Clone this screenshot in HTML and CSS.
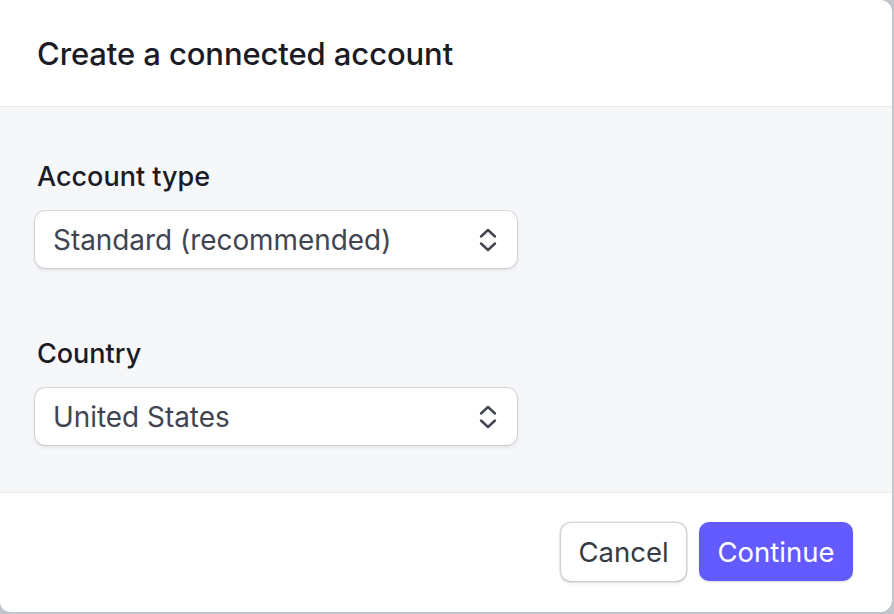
FILE: index.html
```html
<!DOCTYPE html>
<html>
<head>
<meta charset="utf-8">
<link rel="stylesheet" href="styles.css">
</head>
<body>
<div class="dialog">
  <header class="dialog-header">
    <h1 class="title">Create a connected account</h1>
  </header>
  <section class="dialog-body">
    <div class="field">
      <label class="label">Account type</label>
      <div class="select">
        <span class="select-value">Standard (recommended)</span>
        <svg class="chevrons" width="20" height="26" viewBox="0 0 20 26" fill="none" stroke="#414552" stroke-width="2.4" stroke-linecap="round" stroke-linejoin="round"><path d="M3 9.5 L10 3 L17 9.5"/><path d="M3 16.5 L10 23 L17 16.5"/></svg>
      </div>
    </div>
    <div class="field">
      <label class="label">Country</label>
      <div class="select">
        <span class="select-value">United States</span>
        <svg class="chevrons" width="20" height="26" viewBox="0 0 20 26" fill="none" stroke="#414552" stroke-width="2.4" stroke-linecap="round" stroke-linejoin="round"><path d="M3 9.5 L10 3 L17 9.5"/><path d="M3 16.5 L10 23 L17 16.5"/></svg>
      </div>
    </div>
  </section>
  <footer class="dialog-footer">
    <button class="btn btn-secondary">Cancel</button>
    <button class="btn btn-primary">Continue</button>
  </footer>
</div>
</body>
</html>
```
FILE: styles.css
```css
html, body {
  margin: 0;
  padding: 0;
}
body {
  background: #c3c5cc;
  width: 894px;
  height: 614px;
  overflow: hidden;
  font-family: Inter, "Noto Sans", sans-serif;
}
.dialog {
  width: 892px;
  height: 612px;
  background: #ffffff;
  border-radius: 0 12px 12px 10px;
  display: flex;
  flex-direction: column;
  overflow: hidden;
}
.dialog-header {
  display: flex;
  align-items: center;
  padding: 0 37px;
  border-bottom: 1px solid #e6e8ec;
  box-sizing: border-box;
  flex: none;
  height: 107px;
}
.title {
  margin: 0;
  font-size: 31px;
  font-weight: 500;
  color: #1a1b25;
  letter-spacing: -0.1px;
}
.dialog-body {
  background: #f6f7f9;
  padding: 53px 35px 0;
  display: flex;
  flex-direction: column;
  gap: 69px;
  border-bottom: 1px solid #ebeef1;
  flex: none;
  height: 386px;
  box-sizing: border-box;
}
.field {
  display: flex;
  flex-direction: column;
  gap: 17px;
}
.label {
  font-size: 27px;
  font-weight: 500;
  color: #1a1b25;
  line-height: 34px;
  padding-left: 2px;
}
.select {
  width: 482px;
  height: 57px;
  box-sizing: border-box;
  background: #ffffff;
  border-radius: 10px;
  box-shadow: 0 0 0 1px rgba(64, 68, 82, 0.16), 0 2px 4px rgba(64, 68, 82, 0.12);
  display: flex;
  align-items: center;
  justify-content: space-between;
  padding: 0 19px 0 18px;
}
.select-value {
  font-size: 27.9px;
  color: #414552;
}
.chevrons {
  display: block;
}
.dialog-footer {
  flex: 1;
  display: flex;
  justify-content: flex-end;
  align-items: center;
  gap: 13px;
  padding: 0 39px 2px 0;
}
.btn {
  font-family: Inter, "Noto Sans", sans-serif;
  font-size: 27.5px;
  height: 58px;
  border-radius: 10px;
  border: none;
  padding: 0;
  cursor: pointer;
}
.btn-secondary {
  background: #ffffff;
  color: #353a44;
  box-shadow: 0 0 0 1.5px rgba(64, 68, 82, 0.2), 0 2px 4px rgba(64, 68, 82, 0.12);
  width: 125px;
}
.btn-primary {
  background: #635bff;
  color: #ffffff;
  width: 154px;
  height: 59px;
  box-shadow: 0 1px 2px rgba(64, 68, 82, 0.2);
}
```
